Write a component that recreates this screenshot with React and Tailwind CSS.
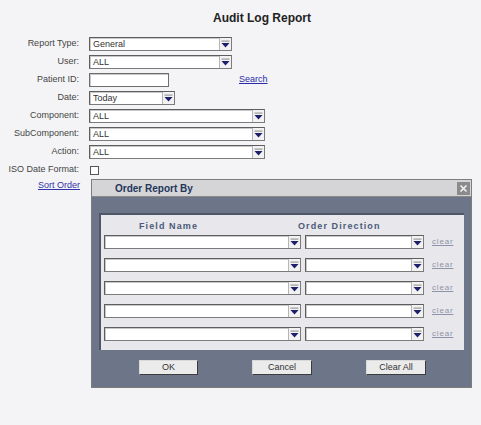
import { useState } from 'react';

const FONT = { fontFamily: '"Liberation Sans", Arial, sans-serif' };

// Little navy arrow box used by every old-school select
function Arrow() {
  return (
    <span className="flex h-full w-[12px] items-center justify-center border-l border-[#b5b5b5] bg-[#f2f2f2]">
      <svg width="9" height="8" viewBox="0 0 9 8">
        <rect x="0.5" y="0.5" width="8" height="1.2" fill="#9a9a9a" />
        <path d="M0.5 3 L8.5 3 L4.5 7.5 Z" fill="#1c1f6b" />
      </svg>
    </span>
  );
}

function Select({ value = '', width }) {
  return (
    <div
      className="flex h-[14px] items-center border border-[#7b7b7b] border-t-[#5e5e5e] border-l-[#5e5e5e] bg-white shadow-[inset_1px_1px_0_#c8c8c8]"
      style={{ width }}
    >
      <span className="flex-1 truncate pl-[3px] text-[9px] leading-none text-[#333]">
        {value}
      </span>
      <Arrow />
    </div>
  );
}

function FormRow({ label, children }) {
  return (
    <div className="flex h-[18px] items-center">
      <span className="w-[80px] pr-[1px] text-right text-[9px] text-[#444]">
        {label}
      </span>
      <div className="ml-[9px] flex items-center">{children}</div>
    </div>
  );
}

function DialogButton({ children, width }) {
  return (
    <button
      className="block h-[15px] border border-[#d9d9d9] border-r-[#3c3c3c] border-b-[#3c3c3c] bg-[#ebebeb] text-[9px] leading-none text-[#333]"
      style={{ width }}
    >
      {children}
    </button>
  );
}

export default function App() {
  const [iso, setIso] = useState(false);

  return (
    <div
      className="relative h-[425px] w-[481px] overflow-hidden bg-[#f4f4f6]"
      style={FONT}
    >
      {/* Title */}
      <div className="pt-[10px] text-center">
        <h1 className="ml-[43px] text-[12px] font-bold leading-[16px] text-[#222]">
          Audit Log Report
        </h1>
      </div>

      {/* Filter form */}
      <div className="mt-[9px] flex flex-col">
        <FormRow label="Report Type:">
          <Select value="General" width={143} />
        </FormRow>
        <FormRow label="User:">
          <Select value="ALL" width={143} />
        </FormRow>
        <FormRow label="Patient ID:">
          <input className="h-[14px] w-[80px] border border-[#6e6e6e] bg-white shadow-[inset_1px_1px_0_#c8c8c8]" />
          <a className="ml-[70px] text-[9px] text-[#2b2ba8] underline">Search</a>
        </FormRow>
        <FormRow label="Date:">
          <Select value="Today" width={86} />
        </FormRow>
        <FormRow label="Component:">
          <Select value="ALL" width={176} />
        </FormRow>
        <FormRow label="SubComponent:">
          <Select value="ALL" width={176} />
        </FormRow>
        <FormRow label="Action:">
          <Select value="ALL" width={176} />
        </FormRow>
        <FormRow label="ISO Date Format:">
          <span
            onClick={() => setIso(!iso)}
            className="ml-[1px] block h-[9px] w-[9px] border border-[#555] bg-white"
          />
        </FormRow>
        <div className="flex h-[14px] items-center">
          <a className="w-[80px] text-right text-[9px] text-[#3333aa] underline">
            Sort Order
          </a>
        </div>
      </div>

      {/* Order Report By dialog */}
      <div className="absolute left-[91px] top-[179px] flex h-[209px] w-[381px] flex-col border border-[#7d7d7d] bg-[#6d7588]">
        <div className="flex h-[17px] items-center justify-between border-b border-[#8a8a8a] bg-[#d5d5d7] pl-[23px] pr-[1px]">
          <span className="text-[10px] font-bold text-[#23365a]">Order Report By</span>
          <span className="flex h-[13px] w-[13px] items-center justify-center bg-[#8b8b8b]">
            <svg width="9" height="9" viewBox="0 0 9 9">
              <path d="M1.5 1.5 L7.5 7.5 M7.5 1.5 L1.5 7.5" stroke="#f2f2f2" strokeWidth="1.6" />
            </svg>
          </span>
        </div>

        <div className="mx-[7px] mt-[16px] border-t-2 border-l-2 border-[#4f5668] bg-[#e8e7eb] pb-[9px] pl-[3px]">
          <div className="flex pt-[6px] text-[9px] font-bold leading-[11px] tracking-[1.1px] text-[#4b5a79]">
            <span className="ml-[35px]">Field Name</span>
            <span className="ml-[100px]">Order Direction</span>
          </div>
          <div className="mt-[3px] flex flex-col gap-[9px]">
            {[0, 1, 2, 3, 4].map((i) => (
              <div key={i} className="flex items-center">
                <Select width={197} />
                <div className="ml-[4px]">
                  <Select width={119} />
                </div>
                <a className="ml-[8px] text-[8px] tracking-[0.8px] text-[#8e93a9] underline">
                  clear
                </a>
              </div>
            ))}
          </div>
        </div>

        <div className="mt-[10px] flex">
          <div className="ml-[47px] flex">
            <DialogButton width={59}>OK</DialogButton>
          </div>
          <div className="ml-[54px] flex">
            <DialogButton width={60}>Cancel</DialogButton>
          </div>
          <div className="ml-[54px] flex">
            <DialogButton width={60}>Clear All</DialogButton>
          </div>
        </div>
      </div>
    </div>
  );
}
